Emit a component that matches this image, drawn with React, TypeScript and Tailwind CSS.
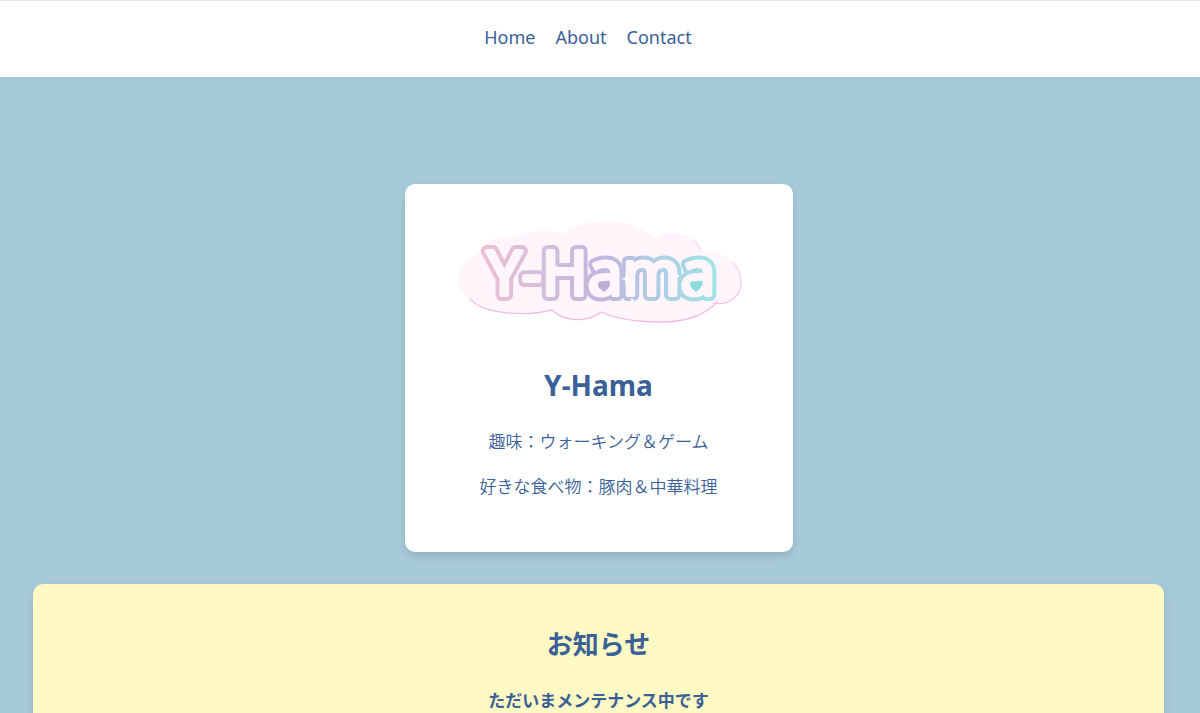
const navItems = [
  { label: 'Home', href: '#home' },
  { label: 'About', href: '#about' },
  { label: 'Contact', href: '#contact' },
];

function Logo() {
  return (
    <svg viewBox="0 0 290 110" className="w-[290px] h-[110px]" role="img" aria-label="Y-Hama">
      <defs>
        <linearGradient id="lettering" gradientUnits="userSpaceOnUse" x1="25" y1="0" x2="264" y2="0">
          <stop offset="0" stopColor="#efbfd2" />
          <stop offset="0.25" stopColor="#d5bedd" />
          <stop offset="0.5" stopColor="#c2b6dd" />
          <stop offset="0.75" stopColor="#afcde4" />
          <stop offset="1" stopColor="#a0e6e6" />
        </linearGradient>
        <linearGradient id="rim" gradientUnits="userSpaceOnUse" x1="0" y1="60" x2="0" y2="106">
          <stop offset="0" stopColor="#f7d5ec" />
          <stop offset="1" stopColor="#efb9dd" />
        </linearGradient>
      </defs>
      <path
        fill="#fff5fb"
        d="M3 66C3 51 12 42 23 38C28 26 43 18 60 22C70 14 91 13 109 18C121 8 137 5 155 5C176 6 191 13 199 22C217 11 243 18 246 35C270 34 286 49 287 65C287 80 277 88 262 88C250 99 232 106 206 106C181 106 159 102 145 98C132 107 109 107 96 95C74 99 48 98 28 89C13 84 3 76 3 66Z"
      />
      <g fill="none" stroke="url(#rim)" strokeWidth="1.3" strokeLinecap="round">
        <path d="M15 83C29 98 70 101 97 94C111 107 133 106 146 96C160 102 181 106 206 106C232 106 250 99 262 86" />
        <path d="M258 87C274 90 287 80 286 65C286 57 282 51 278 47" />
        <path d="M238 24C242 27 244 30 245 34" />
      </g>
      <g fontFamily="'Noto Sans', sans-serif" fontSize="62" textAnchor="middle" strokeLinejoin="round" strokeLinecap="round">
        <text x="146" y="79" fill="url(#lettering)" stroke="url(#lettering)" strokeWidth="12">Y-Hama</text>
        <text x="146" y="79" fill="#fff5fb" stroke="#fff5fb" strokeWidth="4" aria-hidden="true">Y-Hama</text>
      </g>
      <path fill="#bbafd8" d="M149 76C144 72 143 70 143 68C143 65 147 64 149 67C151 64 155 65 155 68C155 70 153 73 149 76Z" />
      <path fill="#8fdce0" d="M241 76C236 72 235 70 235 68C235 65 239 64 241 67C243 64 247 65 247 68C247 70 245 73 241 76Z" />
      <g fill="#ffffff">
        <circle cx="36" cy="36" r="1" />
        <circle cx="38" cy="41" r="1.2" />
        <circle cx="73" cy="64" r="1.2" />
        <circle cx="84" cy="51" r="1" />
        <circle cx="102" cy="51" r="1" />
        <circle cx="122" cy="78" r="1" />
        <path d="M171 56L172 62L176 63L172 64L171 70L170 64L166 63L170 62Z" />
        <circle cx="177" cy="84" r="1.4" />
        <circle cx="223" cy="60" r="1.2" />
      </g>
    </svg>
  );
}

export default function App() {
  return (
    <div className="min-h-screen bg-[#a7cad9] text-[#3b5f97] font-['Noto_Sans','Noto_Sans_CJK_JP',sans-serif] text-[17px]">
      <header className="border-t border-[#e4e5e7] bg-white pt-6 pb-7">
        <nav aria-label="Main">
          <ul className="flex justify-center gap-5 pr-6 text-lg leading-6">
            {navItems.map((item) => (
              <li key={item.label}>
                <a href={item.href} className="hover:underline">{item.label}</a>
              </li>
            ))}
          </ul>
        </nav>
      </header>
      <main className="flex flex-col gap-8 pt-[107px] pb-8 pl-[33px] pr-9 text-center">
        <section className="self-center w-full max-w-[388px] rounded-[10px] bg-white pt-8 pb-[54px] shadow-[0_4px_8px_rgba(0,0,0,0.12)]">
          <div className="flex justify-center pl-[3px]">
            <Logo />
          </div>
          <h1 className="mt-[39px] text-[28px] leading-10 font-bold">Y-Hama</h1>
          <p className="mt-6 font-['Noto_Sans_CJK_JP',sans-serif] font-[350] leading-6">趣味：ウォーキング＆ゲーム</p>
          <p className="mt-[21px] font-['Noto_Sans_CJK_JP',sans-serif] font-[350] leading-6">好きな食べ物：豚肉＆中華料理</p>
        </section>
        <section className="rounded-[10px] bg-[#fff9c4] pt-10 pb-12 shadow-[0_4px_8px_rgba(0,0,0,0.12)]">
          <h2 className="text-[26px] leading-10 font-bold">お知らせ</h2>
          <p className="mt-[25px] font-bold leading-6">ただいまメンテナンス中です</p>
        </section>
      </main>
    </div>
  );
}
